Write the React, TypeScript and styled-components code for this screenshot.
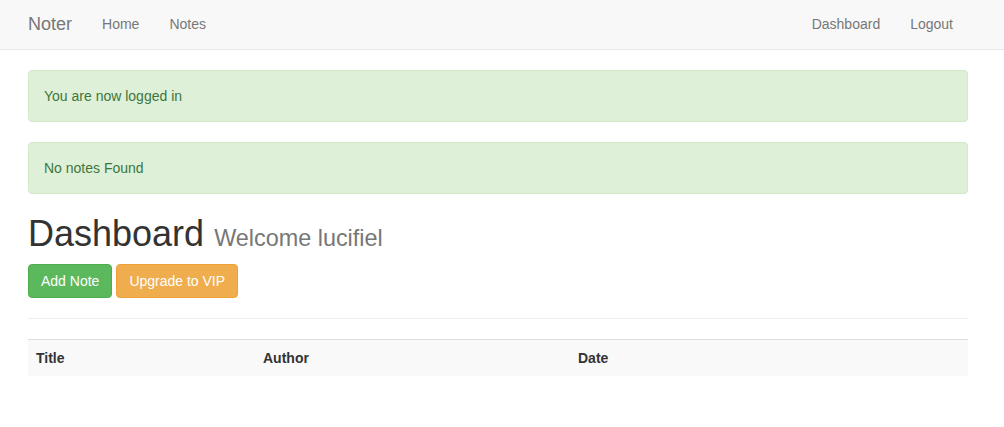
import React from "react";
import styled, { createGlobalStyle } from "styled-components";

const Global = createGlobalStyle`
  * { box-sizing: border-box; }
  body {
    margin: 0;
    font-family: "Liberation Sans", Arial, sans-serif;
    font-size: 14px;
    line-height: 1.42857143;
    color: #333;
    background: #fff;
  }
`;

const Navbar = styled.nav`
  height: 50px;
  background: #f8f8f8;
  border-bottom: 1px solid #e7e7e7;
  margin-bottom: 20px;
`;

const NavContainer = styled.div`
  width: 970px;
  margin-left: 13px;
  padding: 0 15px;
  display: flex;
  align-items: flex-start;
`;

const Brand = styled.a`
  margin-left: -15px;
  padding: 14px 15px 15px;
  font-size: 18px;
  line-height: 20px;
  color: #777;
  text-decoration: none;
`;

const NavList = styled.ul<{ $right?: boolean }>`
  list-style: none;
  margin: 0;
  padding: 0;
  display: flex;
  ${(p) => (p.$right ? "margin-left: auto;" : "")}
`;

const NavLink = styled.a`
  display: block;
  padding: 14px 15px 15px;
  line-height: 20px;
  color: #777;
  text-decoration: none;
`;

const Container = styled.main`
  width: 970px;
  margin-left: 13px;
  padding: 0 15px;
`;

const Alert = styled.div`
  padding: 15px;
  margin-bottom: 20px;
  border: 1px solid #d6e9c6;
  border-radius: 4px;
  background: #dff0d8;
  color: #3c763d;
`;

const Title = styled.h1`
  margin: 20px 0 10px;
  font-size: 36px;
  font-weight: 500;
  line-height: 1.1;
  color: #333;
`;

const Small = styled.small`
  font-size: 65%;
  font-weight: 400;
  color: #777;
`;

const Actions = styled.div`
  display: flex;
  gap: 4px;
`;

const Button = styled.a<{ $variant: "success" | "warning" }>`
  display: inline-block;
  padding: 6px 12px;
  font-size: 14px;
  line-height: 20px;
  border-radius: 4px;
  border: 1px solid ${(p) => (p.$variant === "success" ? "#4cae4c" : "#eea236")};
  background: ${(p) => (p.$variant === "success" ? "#5cb85c" : "#f0ad4e")};
  color: #fff;
  text-decoration: none;
`;

const Rule = styled.hr`
  margin: 20px 0;
  border: 0;
  border-top: 1px solid #eee;
`;

const Table = styled.table`
  width: 100%;
  border-collapse: collapse;
  border-spacing: 0;
  margin-bottom: 20px;
`;

const Row = styled.tr`
  background: #f9f9f9;
`;

const Th = styled.th<{ $w?: number }>`
  padding: 8px;
  line-height: 20px;
  text-align: left;
  font-weight: 700;
  border-top: 1px solid #ddd;
  vertical-align: top;
  ${(p) => (p.$w ? `width: ${p.$w}px;` : "")}
`;

export default function App() {
  return (
    <>
      <Global />
      <Navbar>
        <NavContainer>
          <Brand href="#">Noter</Brand>
          <NavList>
            <li><NavLink href="#">Home</NavLink></li>
            <li><NavLink href="#">Notes</NavLink></li>
          </NavList>
          <NavList $right>
            <li><NavLink href="#">Dashboard</NavLink></li>
            <li><NavLink href="#">Logout</NavLink></li>
          </NavList>
        </NavContainer>
      </Navbar>
      <Container>
        <Alert>You are now logged in</Alert>
        <Alert>No notes Found</Alert>
        <Title>
          Dashboard <Small>Welcome lucifiel</Small>
        </Title>
        <Actions>
          <Button $variant="success" href="#">Add Note</Button>
          <Button $variant="warning" href="#">Upgrade to VIP</Button>
        </Actions>
        <Rule />
        <Table>
          <tbody>
            <Row>
              <Th $w={227}>Title</Th>
              <Th $w={315}>Author</Th>
              <Th>Date</Th>
            </Row>
          </tbody>
        </Table>
      </Container>
    </>
  );
}
